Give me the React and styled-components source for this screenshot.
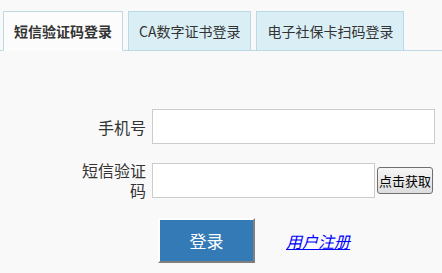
import styled, { createGlobalStyle } from "styled-components";

const Global = createGlobalStyle`
  html, body {
    margin: 0;
    padding: 0;
    background: #f9f9f9;
    font-family: "Noto Sans CJK SC", "Liberation Sans", sans-serif;
  }
`;

const tabs = ["短信验证码登录", "CA数字证书登录", "电子社保卡扫码登录"];

const App = () => {
  return (
    <Page>
      <Global />
      <TabBar>
        {tabs.map((t, i) => (
          <Tab key={t} $active={i === 0}>
            {t}
          </Tab>
        ))}
      </TabBar>
      <Form>
        <Label>手机号</Label>
        <Input $wide />
        <Spacer />
        <Label>短信验证码</Label>
        <CodeRow>
          <Input />
          <GetCode>点击获取</GetCode>
        </CodeRow>
      </Form>
      <Actions>
        <LoginButton>登录</LoginButton>
        <RegLink href="#">用户注册</RegLink>
      </Actions>
    </Page>
  );
};

const Page = styled.div`
  width: 442px;
  height: 273px;
  padding-top: 11px;
  box-sizing: border-box;
  overflow: hidden;
`;

const TabBar = styled.div`
  display: flex;
  gap: 5px;
  padding-left: 3px;
  border-bottom: 1px solid #bcd9e4;
  height: 39px;
`;

const Tab = styled.div`
  height: 40px;
  box-sizing: border-box;
  padding: 0 10px;
  display: flex;
  align-items: center;
  font-size: 14px;
  color: #333;
  font-weight: ${(p) => (p.$active ? 700 : 400)};
  background: ${(p) => (p.$active ? "#fcfcfc" : "#daeef5")};
  border: 1px solid #bcd9e4;
  border-bottom: 1px solid ${(p) => (p.$active ? "#fcfcfc" : "#bcd9e4")};
`;

const Form = styled.div`
  display: grid;
  grid-template-columns: 66px auto;
  column-gap: 6px;
  padding-left: 80px;
  margin-top: 58px;
  align-items: center;
`;

const Spacer = styled.div`
  grid-column: 1 / 3;
  height: 16px;
`;

const Label = styled.div`
  font-size: 16px;
  line-height: 20px;
  color: #333;
  text-align: right;
`;

const Input = styled.input`
  width: ${(p) => (p.$wide ? "283px" : "223px")};
  height: 35px;
  box-sizing: border-box;
  border: 1px solid #ccc;
  background: #fff;
  margin: 0;
  padding: 0 4px;
  outline: none;
`;

const CodeRow = styled.div`
  display: flex;
  align-items: center;
  gap: 2px;
`;

const GetCode = styled.button`
  height: 27px;
  width: 56px;
  padding: 0;
  font-family: "Noto Sans CJK SC", sans-serif;
  font-size: 13px;
  color: #000;
  border: 1px solid #707070;
  border-radius: 3px;
  background: linear-gradient(#f6f6f6, #dddddd);
`;

const Actions = styled.div`
  display: flex;
  align-items: center;
  padding-left: 158px;
  margin-top: 18px;
  gap: 31px;
`;

const LoginButton = styled.button`
  width: 97px;
  height: 45px;
  box-sizing: border-box;
  background: #337ab7;
  color: #fff;
  font-family: "Noto Sans CJK SC", sans-serif;
  font-size: 17px;
  border: 2px solid;
  border-color: #fff #808080 #808080 #fff;
`;

const RegLink = styled.a`
  font-size: 16px;
  font-style: italic;
  color: #0000ff;
  text-decoration: underline;
`;

export default App;
